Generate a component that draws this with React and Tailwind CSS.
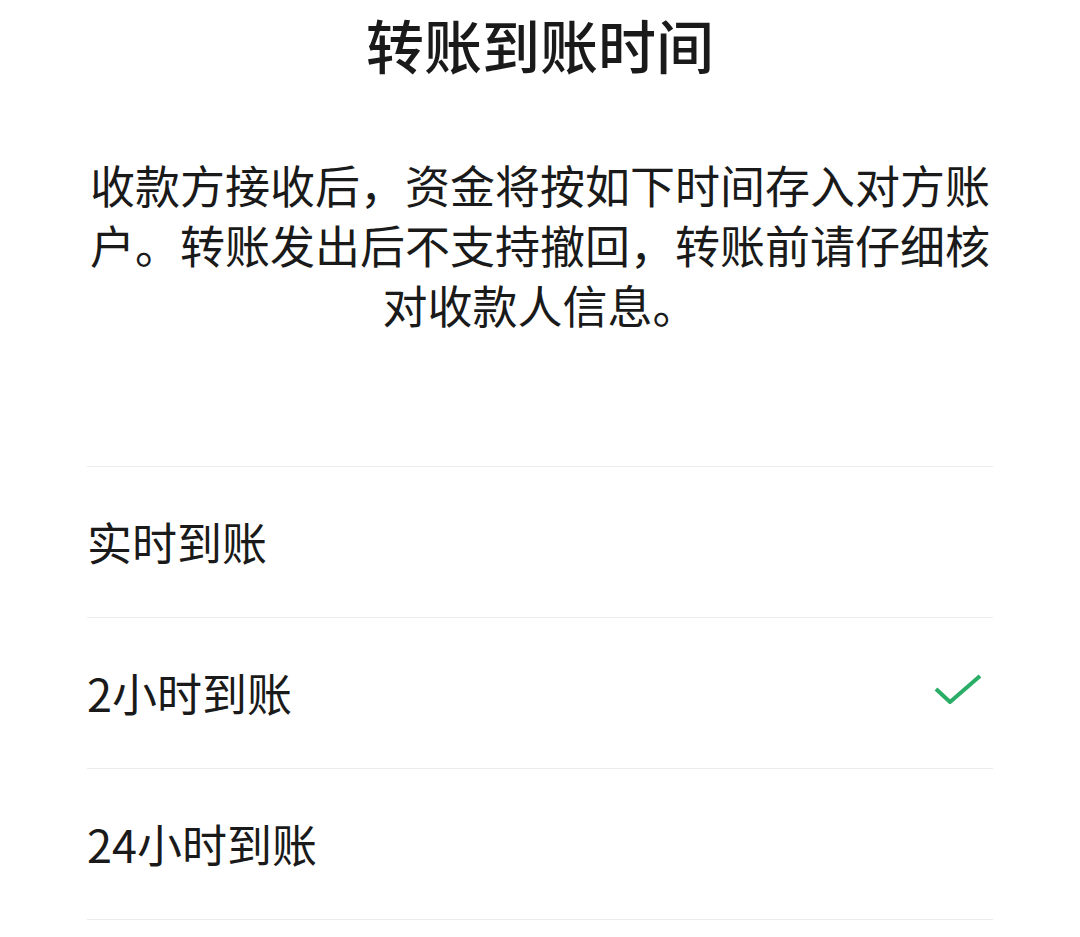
import React, { useState } from "react";

const OPTIONS = ["实时到账", "2小时到账", "24小时到账"];

const FONT = { fontFamily: '"Noto Sans CJK SC", "Noto Sans", sans-serif' };

function CheckIcon() {
  return (
    <svg width="52" height="40" viewBox="0 0 52 40" fill="none">
      <path d="M3 16 L17 29 L47 3" stroke="#2aae67" strokeWidth="4" strokeLinecap="butt" strokeLinejoin="round" />
    </svg>
  );
}

export default function App() {
  const [selected, setSelected] = useState(1);

  return (
    <div className="min-h-[937px] bg-white text-[#1a1a1a] px-[87px]" style={FONT}>
      {/* Title */}
      <h1 className="pt-[9px] text-center text-[58px] leading-[70px] font-medium">
        转账到账时间
      </h1>

      {/* Description */}
      <p className="mt-[76px] text-center text-[45px] leading-[60px]">
        收款方接收后，资金将按如下时间存入对方账
        <br />
        户。转账发出后不支持撤回，转账前请仔细核
        <br />
        对收款人信息。
      </p>

      {/* Options */}
      <div className="mt-[131px] border-t border-[#ececec]">
        {OPTIONS.map((label, i) => (
          <button
            key={label}
            onClick={() => setSelected(i)}
            className="w-full h-[151px] flex items-center justify-between border-b border-[#ececec] text-left"
          >
            <span className="text-[45px] leading-[60px]">{label}</span>
            {selected === i && (
              <span className="mr-[8px]">
                <CheckIcon />
              </span>
            )}
          </button>
        ))}
      </div>
    </div>
  );
}
